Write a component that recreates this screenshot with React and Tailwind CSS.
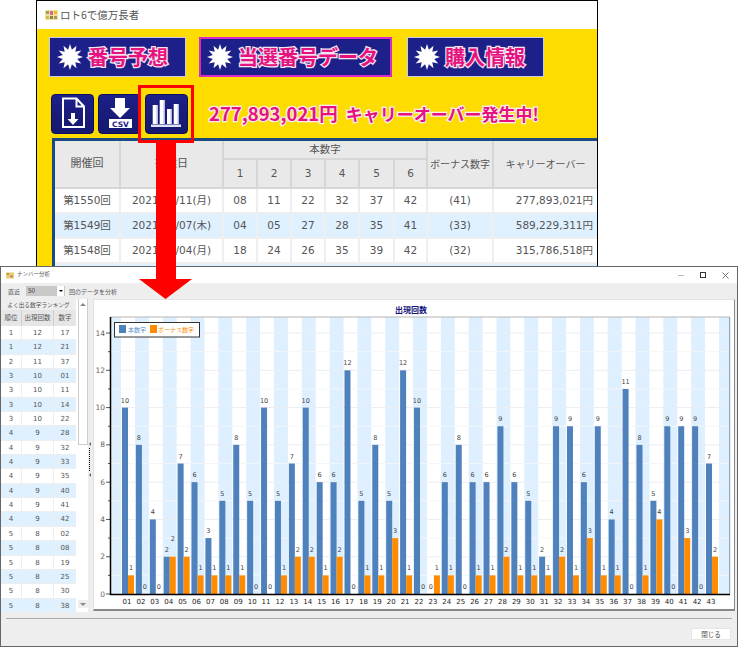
import React from "react";

const jp = "[font-family:'DejaVu_Sans','Noto_Sans_CJK_JP',sans-serif]";

const main = [10,8,4,2,7,6,3,5,8,5,10,5,7,10,6,6,12,5,8,5,12,10,0,6,8,6,6,9,6,5,2,9,9,6,9,4,11,8,5,9,9,9,7];
const bonus = [1,0,0,2,2,1,1,1,1,0,0,1,2,2,1,2,0,1,1,3,1,0,1,1,0,1,1,2,1,1,1,2,1,3,1,1,0,1,4,0,3,0,2];

const rows = [
  ["第1550回","2021/10/11(月)","08","11","22","32","37","42","(41)","277,893,021円"],
  ["第1549回","2021/10/07(木)","04","05","27","28","35","41","(33)","589,229,311円"],
  ["第1548回","2021/10/04(月)","18","24","26","35","39","42","(32)","315,786,518円"],
  ["","","","","","","","","",""],
];

const ranking = [
  [1,12,17],[1,12,21],[2,11,37],[3,10,"01"],[3,10,11],[3,10,14],[3,10,22],
  [4,9,28],[4,9,32],[4,9,33],[4,9,35],[4,9,40],[4,9,41],[4,9,42],
  [5,8,"02"],[5,8,"08"],[5,8,19],[5,8,25],[5,8,30],[5,8,38],
];

const X0 = 128;
const STEP = 13.905;
const Y0 = 594;
const UNIT = 18.64;

function burst(cx, cy, r1, r2, n) {
  const pts = [];
  for (let i = 0; i < n * 2; i++) {
    const a = (Math.PI * i) / n - Math.PI / 2;
    const r = i % 2 === 0 ? r1 : r2;
    pts.push((cx + r * Math.cos(a)).toFixed(1) + "," + (cy + r * Math.sin(a)).toFixed(1));
  }
  return pts.join(" ");
}

function Star() {
  return (
    <svg width="26" height="26" viewBox="0 0 26 26" className="shrink-0">
      <polygon points={burst(13, 13, 13, 7.5, 12)} fill="#fff" />
    </svg>
  );
}

function AppIcon() {
  return (
    <svg width="13" height="10" viewBox="0 0 13 10" className="shrink-0">
      <rect width="13" height="10" fill="#efe3a0" />
      <rect x="1" y="1" width="3" height="3" fill="#a89a5a" />
      <rect x="5" y="1" width="3" height="4" fill="#e0609a" />
      <rect x="9" y="1" width="3" height="3" fill="#e8c020" />
      <rect x="1" y="6" width="3" height="3" fill="#d8b840" />
      <rect x="5" y="6" width="3" height="3" fill="#8a8060" />
      <rect x="9" y="6" width="3" height="3" fill="#a89a5a" />
    </svg>
  );
}

function NavButton({ label, active, className }) {
  return (
    <div
      className={
        "flex items-center gap-[5px] h-[40px] bg-[#1d2088] border " +
        (active ? "border-2 border-[#d62bc8] " : "border-[#c9cbe8] ") +
        className
      }
    >
      <Star />
      <span className="text-[20px] leading-none font-bold text-[#e6127f] [font-family:'Noto_Sans_CJK_JP',sans-serif] [-webkit-text-stroke:2.5px_#f3e6f2] [paint-order:stroke_fill]">
        {label}
      </span>
    </div>
  );
}

function IconButton({ children }) {
  return (
    <div className="w-[43px] h-[40px] rounded-[4px] border border-[#0c1060] bg-gradient-to-b from-[#1d2088] to-[#14186e]">
      <svg width="41" height="38" viewBox="1 1 41 38" className="block">
        {children}
      </svg>
    </div>
  );
}

function Chart() {
  const grid = [];
  for (let v = 0; v <= 14; v++) grid.push(v);
  return (
    <svg width="640" height="310" viewBox="94 300 640 310" className="block">
      <rect x="110" y="317" width="620" height="277" fill="#fff" />
      <rect x="110" y="317" width="11" height="277" fill="#deefff" />
      {main.map((_, i) =>
        i % 2 === 1 ? (
          <rect key={i} x={X0 + i * STEP - STEP / 2} y="317" width={STEP} height="277" fill="#deefff" />
        ) : null
      )}
      <rect x={X0 + 43 * STEP - STEP / 2} y="317" width="12" height="277" fill="#deefff" />
      {grid.map((v) => (
        <g key={v}>
          <line x1="110" x2="730" y1={Y0 - v * UNIT} y2={Y0 - v * UNIT} stroke={v % 2 === 0 ? "#e9eef2" : "#f3f6f8"} />
          <line x1={v % 2 === 0 ? 106 : 108} x2="110" y1={Y0 - v * UNIT} y2={Y0 - v * UNIT} stroke="#555" />
        </g>
      ))}
      <line x1="110" x2="730" y1="317" y2="317" stroke="#b5b5b5" />
      <line x1="729.5" x2="729.5" y1="317" y2="594" stroke="#9aa7b5" />
      {main.map((v, i) => {
        const x = X0 + i * STEP;
        const b = bonus[i];
        return (
          <g key={i} fontSize="6.5" fontFamily="'DejaVu Sans',sans-serif" textAnchor="middle" fill="#444">
            <rect x={x - 6} y={Y0 - v * UNIT} width="6" height={v * UNIT} fill="#4f81bd" />
            <rect x={x} y={Y0 - b * UNIT} width="6" height={b * UNIT} fill="#ff8c00" />
            <text x={x - 3} y={Y0 - v * UNIT - 5}>{v}</text>
            <text x={x + 3} y={Y0 - b * UNIT - (i === 3 ? 15.5 : 5)}>{b}</text>
            <text x={x - 1} y="604" fontSize="7" fill="#222">{String(i + 1).padStart(2, "0")}</text>
          </g>
        );
      })}
      <line x1="110.5" x2="110.5" y1="317" y2="595" stroke="#000" strokeWidth="1.5" />
      <line x1="110" x2="730" y1="594.5" y2="594.5" stroke="#000" strokeWidth="1.5" />
      {grid.filter((v) => v % 2 === 0).map((v) => (
        <text key={v} x="105" y={Y0 - v * UNIT + 2.5} fontSize="7.5" fontFamily="'DejaVu Sans',sans-serif" textAnchor="end" fill="#666">
          {v}
        </text>
      ))}
      <text x="411" y="313" fontSize="8" fontWeight="700" fontFamily="'Noto Sans CJK JP',sans-serif" textAnchor="middle" fill="#14147a">
        出現回数
      </text>
      <rect x="114.5" y="322.5" width="85" height="14.5" fill="#fff" stroke="#333" />
      <rect x="119" y="325" width="7" height="8" fill="#4f81bd" />
      <text x="128" y="332" fontSize="6" fontFamily="'Noto Sans CJK JP',sans-serif" fill="#5a8fc5">本数字</text>
      <rect x="150" y="325" width="7" height="8" fill="#ff8c00" />
      <text x="158" y="332" fontSize="6" fontFamily="'Noto Sans CJK JP',sans-serif" fill="#ff8c00">ボーナス数字</text>
    </svg>
  );
}

export default function App() {
  return (
    <div className={"relative w-[738px] h-[647px] bg-white overflow-hidden " + jp}>
      {/* main window */}
      <div className="absolute left-[36px] top-0 w-[562px] h-[270px] border-x border-t border-black flex flex-col overflow-hidden">
        <div className="h-[28px] shrink-0 flex items-center gap-[2px] pl-[8px] bg-white">
          <AppIcon />
          <span className="text-[10.5px] text-[#555] [font-family:'Noto_Sans_CJK_JP',sans-serif]">ロト6で億万長者</span>
        </div>
        <div className="flex-1 bg-[#ffdc00] pt-[8px]">
          <div className="flex items-start pl-[12px]">
            <NavButton label="番号予想" className="w-[137px] pl-[7px]" />
            <NavButton label="当選番号データ" active className="w-[193px] ml-[13px] pl-[6px]" />
            <NavButton label="購入情報" className="w-[137px] ml-[15px] pl-[6px]" />
          </div>
          <div className="flex gap-[4px] pl-[14px] mt-[17px]">
            <IconButton>
              <path d="M12 4.5h13.5l7.5 8V33H12z M25.5 4.5v8h7.5" fill="none" stroke="#fff" strokeWidth="2" />
              <path d="M20 19h4v6h3.5L22 31l-5.5-6H20z" fill="#fff" />
            </IconButton>
            <IconButton>
              <path d="M17 4h10v10h5L22 24 12 14h5z" fill="#fff" />
              <rect x="11" y="25" width="23" height="9" fill="#fff" />
              <text x="22.5" y="32.5" fontSize="7.5" fontWeight="700" fontFamily="'DejaVu Sans',sans-serif" textAnchor="middle" fill="#1d2088">CSV</text>
            </IconButton>
            <IconButton>
              <path d="M7.7 11H13v19H7.7z M14.7 6H20v24h-5.3z M22 15h5v15h-5z M28.7 10H34v20h-5.3z" fill="#fff" />
              <path d="M11.5 11H13v19h-1.5z M18.5 6H20v24h-1.5z M25.5 15H27v15h-1.5z M32.5 10H34v20h-1.5z" fill="#b9bbe6" />
              <rect x="6" y="30.5" width="30" height="2.5" fill="#e2e2f6" />
            </IconButton>
            <div className="ml-[17px] flex items-center gap-[8px] h-[40px] font-bold text-[#e6127f] [font-family:'Noto_Sans_CJK_JP',sans-serif] [-webkit-text-stroke:2.5px_#f8eef0] [paint-order:stroke_fill]">
              <span className="text-[18.5px]">277,893,021円</span>
              <span className="text-[17px]">キャリーオーバー発生中!</span>
            </div>
          </div>
          <div className="ml-[15px] mt-[4px] border-t-[3px] border-l-[3px] border-[#1a4a80] bg-white">
            <table className="table-fixed w-[542px] border-collapse text-[10.5px] text-[#555]">
              <colgroup>
                <col className="w-[65px]" />
                <col className="w-[103px]" />
                <col className="w-[34px]" />
                <col className="w-[34px]" />
                <col className="w-[34px]" />
                <col className="w-[34px]" />
                <col className="w-[35px]" />
                <col className="w-[33px]" />
                <col className="w-[66px]" />
                <col className="w-[104px]" />
              </colgroup>
              <thead className="bg-[#e9e9e9]">
                <tr className="h-[18px]">
                  <th rowSpan={2} className="border-2 border-t-0 border-l-0 border-[#d6d6d6] font-normal text-[11px]">開催回</th>
                  <th rowSpan={2} className="border-2 border-t-0 border-[#d6d6d6] font-normal text-[11px]">抽選日</th>
                  <th colSpan={6} className="border-2 border-t-0 border-[#d6d6d6] font-normal">本数字</th>
                  <th rowSpan={2} className="border-2 border-t-0 border-[#d6d6d6] font-normal text-[10px] whitespace-nowrap">ボーナス数字</th>
                  <th rowSpan={2} className="border-2 border-t-0 border-r-0 border-[#d6d6d6] font-normal text-[10px] whitespace-nowrap">キャリーオーバー</th>
                </tr>
                <tr className="h-[29px]">
                  {[1, 2, 3, 4, 5, 6].map((n) => (
                    <th key={n} className="border-2 border-[#d6d6d6] font-normal">{n}</th>
                  ))}
                </tr>
              </thead>
              <tbody>
                {rows.map((r, i) => (
                  <tr key={i} className={"h-[25px] " + (i % 2 === 1 ? "bg-[#dff0ff]" : "bg-white")}>
                    {r.map((c, j) => (
                      <td
                        key={j}
                        className={"border-2 border-t-0 border-[#efefef] whitespace-nowrap first:border-l-0 last:border-r-0 " + (j === 9 ? "text-right pr-[4px]" : "text-center")}
                      >
                        {c}
                      </td>
                    ))}
                  </tr>
                ))}
              </tbody>
            </table>
          </div>
        </div>
      </div>

      {/* number analysis window */}
      <div className="absolute left-0 top-[266px] w-[738px] h-[381px] border border-[#666] flex flex-col bg-[#eee] overflow-hidden">
        <div className="h-[16px] shrink-0 bg-white flex items-center pl-[5px] gap-[3px]">
          <svg width="8" height="7" viewBox="0 0 13 10"><rect width="13" height="10" fill="#e8d070" /><rect x="1" y="1" width="4" height="3" fill="#a89a5a" /><rect x="7" y="5" width="4" height="3" fill="#d8609a" /></svg>
          <span className="text-[5.5px] leading-none text-[#555] [font-family:'Noto_Sans_CJK_JP',sans-serif]">ナンバー分析</span>
          <div className="ml-auto flex items-center gap-[16px] pr-[8px]">
            <div className="w-[6px] h-px bg-[#bbb]" />
            <div className="w-[6px] h-[6px] border border-[#333]" />
            <svg width="7" height="7" viewBox="0 0 7 7"><path d="M.5.5l6 6M6.5.5l-6 6" stroke="#555" strokeWidth=".8" /></svg>
          </div>
        </div>
        <div className="h-[16px] shrink-0 flex items-center pl-[7px] text-[6px] text-[#555] [font-family:'Noto_Sans_CJK_JP',sans-serif]">
          <span>直近</span>
          <div className="ml-[6px] w-[39px] h-[10px] bg-[#c8c8c8] flex items-center pl-[2px] text-[6.5px] text-[#444]">
            50
            <div className="ml-auto mr-[1px] w-[7px] h-full bg-white flex items-center justify-center">
              <div className="border-x-[2px] border-t-[2px] border-x-transparent border-t-black" />
            </div>
          </div>
          <span className="ml-[4px]">回のデータを分析</span>
        </div>
        <div className="flex h-[313px] shrink-0">
          <div className="w-[75px] shrink-0 bg-white text-[7px] text-[#555] text-center">
            <div className="h-[11px] bg-[#eee] text-[5.7px] leading-[11px] whitespace-nowrap [font-family:'Noto_Sans_CJK_JP',sans-serif]">よく出る数字ランキング</div>
            <div className="grid grid-cols-[21px_32px_22px] h-[16px] bg-[#e6e6e6] text-[6.5px] leading-[15px] [font-family:'Noto_Sans_CJK_JP',sans-serif]">
              <div className="border-r border-[#d0d0d0]">順位</div>
              <div className="border-r border-[#d0d0d0]">出現回数</div>
              <div>数字</div>
            </div>
            {ranking.map((r, i) => (
              <div key={i} className={"grid grid-cols-[21px_32px_22px] h-[14.35px] leading-[14px] border-b border-[#eee] " + (i % 2 === 1 ? "bg-[#dff0ff]" : "bg-white")}>
                {r.map((c, j) => (
                  <div key={j} className={j < 2 ? "border-r border-[#eee]" : ""}>{c}</div>
                ))}
              </div>
            ))}
          </div>
          <div className="w-[12px] shrink-0 bg-white pl-[2px] flex flex-col pb-[4px]">
            <div className="h-[146px] border border-t-0 border-[#ccc] pt-[4px] flex justify-center">
              <div className="h-0 border-x-[3px] border-b-[3px] border-x-transparent border-b-[#888]" />
            </div>
            <div className="mt-auto h-[8px] flex items-center justify-center bg-[#eee]">
              <div className="border-x-[3px] border-t-[3px] border-x-transparent border-t-[#888]" />
            </div>
          </div>
          <div className="w-[5px] shrink-0 pt-[143px] pl-[1px] flex flex-col items-start">
            <div className="border-y-[2px] border-r-[2px] border-y-transparent border-r-[#666]" />
            <div className="mt-[2px] h-[23px] border-l border-dotted border-black" />
            <div className="mt-[2px] border-y-[2px] border-r-[2px] border-y-transparent border-r-[#666]" />
          </div>
          <div className="w-[642px] h-[312px] shrink-0 bg-white border border-[#e2e2e2] border-r-[#888] border-b-2 border-b-[#888]">
            <Chart />
          </div>
        </div>
        <div className="mx-[5px] mt-[6px] h-px bg-[#aaa] shrink-0" />
        <div className="flex justify-end pr-[6px] pt-[9px]">
          <div className="w-[40px] h-[12px] bg-white border border-[#e5e5e5] text-center text-[6.5px] leading-[10px] text-[#444] [font-family:'Noto_Sans_CJK_JP',sans-serif]">閉じる</div>
        </div>
      </div>

      {/* callout rectangle and arrow over both windows */}
      <div className="absolute left-[138px] top-[85px] w-[56px] h-[58px] border-[3px] border-[#ff0000]" />
      <svg className="absolute left-[139px] top-[143px]" width="53" height="156" viewBox="0 0 53 156">
        <path d="M17 0h20v136h16L26.5 156 0 136h17z" fill="#ff0000" />
      </svg>
    </div>
  );
}
